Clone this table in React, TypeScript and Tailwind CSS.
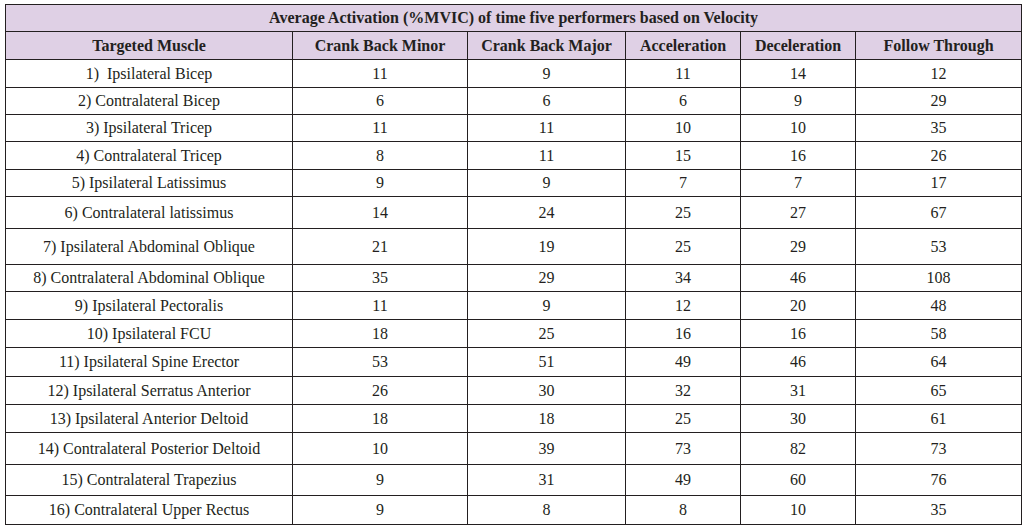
const rows: { name: string; h: number; v: number[] }[] = [
  { name: "1)  Ipsilateral Bicep", h: 28, v: [11, 9, 11, 14, 12] },
  { name: "2) Contralateral Bicep", h: 27, v: [6, 6, 6, 9, 29] },
  { name: "3) Ipsilateral Tricep", h: 27, v: [11, 11, 10, 10, 35] },
  { name: "4) Contralateral Tricep", h: 28, v: [8, 11, 15, 16, 26] },
  { name: "5) Ipsilateral Latissimus", h: 27, v: [9, 9, 7, 7, 17] },
  { name: "6) Contralateral latissimus", h: 32, v: [14, 24, 25, 27, 67] },
  { name: "7) Ipsilateral Abdominal Oblique", h: 36, v: [21, 19, 25, 29, 53] },
  { name: "8) Contralateral Abdominal Oblique", h: 27, v: [35, 29, 34, 46, 108] },
  { name: "9) Ipsilateral Pectoralis", h: 28, v: [11, 9, 12, 20, 48] },
  { name: "10) Ipsilateral FCU", h: 28, v: [18, 25, 16, 16, 58] },
  { name: "11) Ipsilateral Spine Erector", h: 29, v: [53, 51, 49, 46, 64] },
  { name: "12) Ipsilateral Serratus Anterior", h: 28, v: [26, 30, 32, 31, 65] },
  { name: "13) Ipsilateral Anterior Deltoid", h: 28, v: [18, 18, 25, 30, 61] },
  { name: "14) Contralateral Posterior Deltoid", h: 32, v: [10, 39, 73, 82, 73] },
  { name: "15) Contralateral Trapezius", h: 31, v: [9, 31, 49, 60, 76] },
  { name: "16) Contralateral Upper Rectus", h: 29, v: [9, 8, 8, 10, 35] },
];

const headers = [
  "Targeted Muscle",
  "Crank Back Minor",
  "Crank Back Major",
  "Acceleration",
  "Deceleration",
  "Follow Through",
];

export default function App() {
  return (
    <div className="min-h-[529px] w-[1025px] bg-white pl-[5px] pt-[4px] font-['Liberation_Serif',serif] text-[16px] text-[#231f20]">
      <table className="w-[1016px] table-fixed border-collapse border-[1.5px] border-[#231f20]">
        <colgroup>
          <col className="w-[287px]" />
          <col className="w-[175px]" />
          <col className="w-[158px]" />
          <col className="w-[115px]" />
          <col className="w-[115px]" />
          <col className="w-[166px]" />
        </colgroup>
        <thead>
          <tr className="h-[27px] bg-[#dfd0e5]">
            <th colSpan={6} className="border-[1.5px] border-[#231f20] p-0 text-center font-bold">
              Average Activation (%MVIC) of time five performers based on Velocity
            </th>
          </tr>
          <tr className="h-[28px] bg-[#dfd0e5]">
            {headers.map((h) => (
              <th key={h} className="border-[1.5px] border-[#231f20] p-0 text-center font-bold">
                {h}
              </th>
            ))}
          </tr>
        </thead>
        <tbody>
          {rows.map((r) => (
            <tr key={r.name} style={{ height: r.h }}>
              <td className="whitespace-pre border-[1.5px] border-[#231f20] p-0 text-center">
                {r.name}
              </td>
              {r.v.map((n, i) => (
                <td key={i} className="border-[1.5px] border-[#231f20] p-0 text-center">
                  {n}
                </td>
              ))}
            </tr>
          ))}
        </tbody>
      </table>
    </div>
  );
}
